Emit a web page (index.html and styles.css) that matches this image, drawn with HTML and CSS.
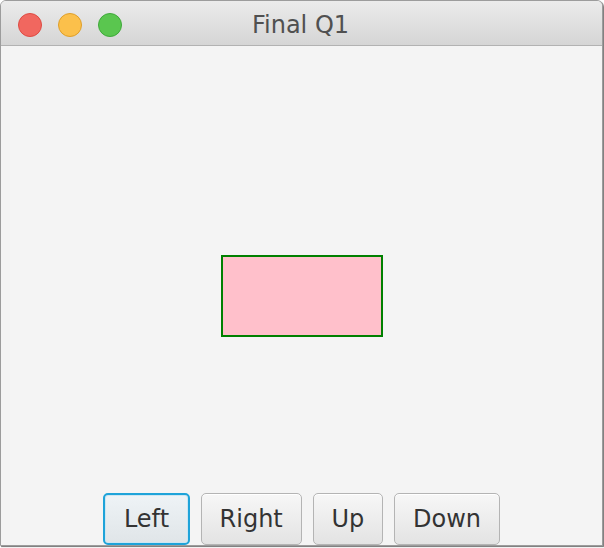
FILE: index.html
```html
<!DOCTYPE html>
<html>
<head>
<meta charset="utf-8">
<link rel="stylesheet" href="styles.css">
</head>
<body>
<div class="window">
  <div class="titlebar">
    <div class="lights">
      <span class="light red"></span>
      <span class="light yellow"></span>
      <span class="light green"></span>
    </div>
    <div class="title">Final Q1</div>
  </div>
  <div class="content">
    <div class="rect"></div>
    <div class="buttons">
      <button class="btn focused">Left</button>
      <button class="btn btn-right">Right</button>
      <button class="btn btn-up">Up</button>
      <button class="btn btn-down">Down</button>
    </div>
  </div>
</div>
</body>
</html>
```
FILE: styles.css
```css
html, body {
  margin: 0;
  padding: 0;
  background: #ffffff;
}
body {
  width: 604px;
  height: 548px;
  overflow: hidden;
}
.window {
  width: 603px;
  height: 546px;
  box-sizing: border-box;
  border: 1px solid #9c9c9c;
  border-radius: 6px 6px 0 0;
  background: #f4f4f4;
  box-shadow: 1px 1px 1px rgba(0,0,0,0.55);
  display: flex;
  flex-direction: column;
  overflow: hidden;
  font-family: "DejaVu Sans", sans-serif;
}
.titlebar {
  height: 45px;
  box-sizing: border-box;
  padding-top: 4px;
  flex: none;
  border-bottom: 1px solid #b2b2b2;
  background: linear-gradient(#ebebeb, #d5d5d5);
  display: grid;
  grid-template-columns: 1fr;
  align-items: center;
}
.lights, .title {
  grid-row: 1;
  grid-column: 1;
}
.lights {
  display: flex;
  gap: 16px;
  padding-left: 17px;
  align-self: center;
}
.light {
  width: 22px;
  height: 22px;
  border-radius: 50%;
  border: 1px solid;
}
.red { background: #f1675f; border-color: #de4b43; }
.yellow { background: #fbc04b; border-color: #df9f2a; }
.green { background: #5ac64f; border-color: #3fa93a; }
.title {
  text-align: center;
  font-size: 24px;
  color: #505050;
  padding-right: 2px;
}
.content {
  flex: 1;
  display: grid;
  grid-template-columns: 1fr;
  grid-template-rows: 1fr;
}
.rect, .buttons {
  grid-row: 1;
  grid-column: 1;
}
.rect {
  width: 158px;
  height: 78px;
  background: #ffc0cb;
  border: 2px solid #008000;
  place-self: center;
}
.buttons {
  align-self: end;
  justify-self: center;
  display: flex;
  gap: 11px;
  margin-bottom: 0;
}
.btn {
  height: 52px;
  box-sizing: border-box;
  padding: 0 18.25px;
  border: 1px solid #b4b4b4;
  border-radius: 5px;
  background: linear-gradient(#f7f7f7, #e3e3e3);
  font-family: "DejaVu Sans", sans-serif;
  font-size: 24px;
  color: #333333;
  box-shadow: inset 0 1px 0 #ffffff;
}
.btn-right {
  padding: 0 17.75px;
}
.btn-up {
  padding: 0 18px;
}
.btn-down {
  padding: 0 17.75px;
}
.btn.focused {
  border: 2px solid #1ea3d9;
  padding: 0 18.75px;
  box-shadow: inset 0 0 0 1px #cde6f2;
  background: linear-gradient(#eef3f6, #e0e5e8);
}
```
